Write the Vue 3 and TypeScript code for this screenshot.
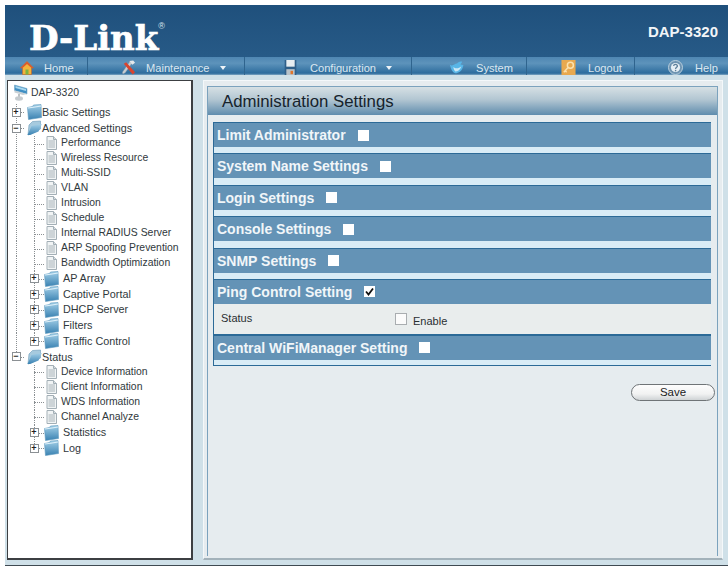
<script setup lang="ts">
type Row = { label: string; kind: 'top' | 'sub' | 'leaf'; open?: boolean; trunk: boolean; last?: boolean }
const leaf = (label: string, trunk = true): Row => ({ label, kind: 'leaf', trunk })
const sub = (label: string, trunk = true, last = false): Row => ({ label, kind: 'sub', trunk, last })
const rows: Row[] = [
  { label: 'Basic Settings', kind: 'top', trunk: true },
  { label: 'Advanced Settings', kind: 'top', open: true, trunk: true },
  ...['Performance', 'Wireless Resource', 'Multi-SSID', 'VLAN', 'Intrusion', 'Schedule', 'Internal RADIUS Server', 'ARP Spoofing Prevention', 'Bandwidth Optimization'].map(l => leaf(l)),
  sub('AP Array'), sub('Captive Portal'), sub('DHCP Server'), sub('Filters'), sub('Traffic Control', true, true),
  { label: 'Status', kind: 'top', open: true, trunk: false },
  ...['Device Information', 'Client Information', 'WDS Information', 'Channel Analyze'].map(l => leaf(l, false)),
  sub('Statistics', false), sub('Log', false, true),
]
const nav = [
  { label: 'Home', icon: 'i-home', cls: 'n-home' },
  { label: 'Maintenance', icon: 'i-tools', cls: 'n-maint', caret: true },
  { label: 'Configuration', icon: 'i-disk', cls: 'n-conf', caret: true },
  { label: 'System', icon: 'i-sys', cls: 'n-sys' },
  { label: 'Logout', icon: 'i-key', cls: 'n-out' },
  { label: 'Help', icon: 'i-help', cls: 'n-help' },
]
const sections = [
  { title: 'Limit Administrator' },
  { title: 'System Name Settings' },
  { title: 'Login Settings' },
  { title: 'Console Settings' },
  { title: 'SNMP Settings' },
  { title: 'Ping Control Setting', checked: true },
  { title: 'Central WiFiManager Setting' },
]
</script>

<template>
  <div class="page">
    <svg class="defs" width="0" height="0" aria-hidden="true">
      <defs>
        <linearGradient id="fold" x1="0" y1="0" x2="0" y2="1">
          <stop offset="0" stop-color="#a4d0e8" /><stop offset="1" stop-color="#3a82b2" />
        </linearGradient>
        <symbol id="i-folder" viewBox="0 0 15 16">
          <path d="M.5 3.5 L5.5 2.5 L6.5 1 L14 .5 L14.5 13.5 L1.5 15.5 Z" fill="url(#fold)" stroke="#5a97bd" stroke-width=".6" />
          <path d="M.8 4 L6.5 3.2 L14 2" fill="none" stroke="#dceff9" stroke-width="1.1" />
        </symbol>
        <symbol id="i-open" viewBox="0 0 15 16">
          <path d="M2 5 L5.5 1.5 L13.5 1 L13.5 9 L4 14 L1 15 Z" fill="#a6cade" stroke="#6b9bb9" stroke-width=".6" />
          <path d="M.5 15 L4.5 6 L14.8 4 L11.5 11.5 L3 15 Z" fill="url(#fold)" />
        </symbol>
        <symbol id="i-leaf" viewBox="0 0 11 14">
          <path d="M1 .5 H7.5 L10.5 3.5 V13.5 H1 Z" fill="#f1f4f5" stroke="#a3afb6" />
          <path d="M2.5 5 H9 M2.5 7 H9 M2.5 9 H9 M2.5 11 H9" stroke="#a9b4ba" />
          <path d="M7.5 .5 V3.5 H10.5" fill="#d5dde1" stroke="#a3afb6" />
        </symbol>
        <symbol id="i-root" viewBox="0 0 14 17">
          <path d="M.5 1 L13 4.5 L13 10 L.5 6.5 Z" fill="#3f8fc4" stroke="#78a9c6" stroke-width=".6" />
          <path d="M1.5 2 L12 5 L12 7 L1.5 4 Z" fill="#a8d7ee" />
          <path d="M.5 6.5 L13 10 L9 11 L.5 8.5 Z" fill="#c8d0d5" />
          <path d="M5 10 V13" stroke="#aab2b6" stroke-width="1.6" />
          <ellipse cx="5" cy="14.5" rx="4" ry="2.2" fill="#c5cbcf" />
        </symbol>
        <symbol id="i-home" viewBox="0 0 14 14">
          <path d="M7 .5 L13.5 7 H11.5 V13.5 H2.5 V7 H.5 Z" fill="#f2b33a" stroke="#c8632a" stroke-width=".6" />
          <path d="M7 .5 L13.5 7 H11.5 L7 3 L2.5 7 H.5 Z" fill="#d8582d" />
          <rect x="5.5" y="8.5" width="3" height="5" fill="#7cb342" />
        </symbol>
        <symbol id="i-tools" viewBox="0 0 16 16">
          <path d="M9.5 1.5 L11.5 3.5 L4.5 13.5 L2 15 L1.5 13 Z" fill="#c9ced2" stroke="#8d979e" stroke-width=".4" />
          <path d="M3 4 L5.5 2.5 L15 13 L12.5 15.5 Z" fill="#d9442e" />
          <path d="M9 1 L13 .5 L15 3 L12 5 Z" fill="#e6e9eb" />
        </symbol>
        <symbol id="i-disk" viewBox="0 0 14 18">
          <rect x="0" y="0" width="14" height="18" fill="#2f5f89" />
          <rect x="2" y="0" width="10" height="8" fill="#e7edf1" />
          <rect x="2" y="11" width="10" height="7" fill="#b8c2c9" />
          <rect x="7" y="13" width="3" height="4" fill="#e0752c" />
        </symbol>
        <symbol id="i-sys" viewBox="0 0 17 15">
          <path d="M1 4 C4 7 6 3 9 3 C11 1 13 0 15 1 L13 4 C16 4 17 5 16 6 C15 11 11 14 7 14 C4 13 2 9 1 4 Z" fill="#58b5e6" />
          <path d="M5 7 C7 9 11 9 14 6 C13 10 10 12 7 12 C6 11 5 9 5 7 Z" fill="#c9e8f7" />
        </symbol>
        <symbol id="i-key" viewBox="0 0 15 16">
          <rect x="0" y="0" width="15" height="16" fill="#e8a94f" />
          <circle cx="9.5" cy="5.5" r="3.2" fill="none" stroke="#fbe2ae" stroke-width="1.6" />
          <path d="M7 8 L2.5 13 M4 11.5 L5.5 13" stroke="#fbe2ae" stroke-width="1.6" fill="none" />
        </symbol>
        <symbol id="i-help" viewBox="0 0 15 15">
          <circle cx="7.5" cy="7.5" r="7" fill="#6e94b2" stroke="#b8cedd" />
          <circle cx="7.5" cy="7.5" r="4.6" fill="#e5eef4" />
          <path d="M5.6 6 C5.8 3.9 9.6 4 9.4 6.1 C9.3 7.3 7.6 7.3 7.6 9" fill="none" stroke="#5d7f9a" stroke-width="1.3" />
          <circle cx="7.6" cy="10.6" r=".8" fill="#5d7f9a" />
        </symbol>
      </defs>
    </svg>

    <header class="masthead">
      <div class="logo">D-Link<sup>®</sup></div>
      <div class="model">DAP-3320</div>
    </header>

    <nav class="menu">
      <div v-for="n in nav" :key="n.label" class="menu-item" :class="n.cls">
        <svg class="menu-icon"><use :href="'#' + n.icon" /></svg>
        <span class="menu-label">{{ n.label }}</span>
        <span v-if="n.caret" class="caret"></span>
      </div>
    </nav>

    <div class="body">
      <aside class="tree">
        <div class="root-row">
          <svg class="root-icon"><use href="#i-root" /></svg>
          <span>DAP-3320</span>
        </div>
        <div v-for="r in rows" :key="r.label" class="row" :class="'row-' + r.kind">
          <div class="cell c1" :class="{ trunk: r.trunk, 'trunk-end': r.label === 'Status', dash: r.kind === 'top' }">
            <span v-if="r.kind === 'top'" class="exp">{{ r.open ? '−' : '+' }}</span>
          </div>
          <div v-if="r.kind !== 'top'" class="cell c2 dash" :class="r.last ? 'trunk-end' : 'trunk'">
            <span v-if="r.kind === 'sub'" class="exp">+</span>
          </div>
          <svg v-if="r.kind === 'leaf'" class="ic-leaf"><use href="#i-leaf" /></svg>
          <svg v-else class="ic-folder"><use :href="r.open ? '#i-open' : '#i-folder'" /></svg>
          <span class="lbl">{{ r.label }}</span>
        </div>
      </aside>

      <main class="panel">
        <div class="inner">
          <h1 class="title">Administration Settings</h1>
          <div class="sections">
            <section v-for="s in sections" :key="s.title" class="sec">
              <div class="sec-head">
                <span>{{ s.title }}</span>
                <span class="box">
                  <svg v-if="s.checked" viewBox="0 0 11 11" width="11" height="11">
                    <path d="M2 5.5 L4.5 8.5 L9 2.5" fill="none" stroke="#111" stroke-width="1.8" />
                  </svg>
                </span>
              </div>
              <div v-if="s.checked" class="sec-body">
                <span class="st-label">Status</span>
                <span class="st-box"></span>
                <span class="st-enable">Enable</span>
              </div>
            </section>
          </div>
          <div class="actions"><button class="save" type="button">Save</button></div>
        </div>
      </main>
    </div>
    <div class="foot"></div>
  </div>
</template>

<style>
html, body { margin: 0; background: #fff; overflow: hidden; }
</style>

<style scoped>
.page { width: 723px; margin: 5px 0 0 5px; font-family: "Liberation Sans", Arial, sans-serif; position: relative; }
.defs { position: absolute; }
.masthead {
  height: 52px; display: flex; justify-content: space-between; align-items: flex-start;
  background: linear-gradient(#1f507c, #275a87);
}
.logo {
  font-family: "DejaVu Serif", serif; font-weight: 700; font-size: 34px; line-height: 40px;
  color: #fff; margin: 13px 0 0 24px; -webkit-text-stroke: .7px #fff;
}
.logo sup { font-family: "Liberation Sans", sans-serif; font-size: 9px; font-weight: 400; line-height: 0; vertical-align: 21px; color: #dde6ee; -webkit-text-stroke: 0; }
.model { color: #f2f5f8; font-weight: 700; font-size: 15px; margin: 18px 10px 0 0; }

.menu {
  height: 18px; display: flex;
  background: linear-gradient(#4f86b2 0, #5d93bb 35%, #2d6c9d 90%, #7ea6c3 100%);
}
.menu-item { display: flex; align-items: center; border-right: 1px solid #2f648e; box-sizing: border-box; color: #dbe7f0; font-size: 11.1px; }
.menu-icon { flex: none; width: 15px; height: 15px; margin-top: 3px; }
.menu-label { margin-top: 3px; }
.caret { width: 0; height: 0; border: 3.5px solid transparent; border-top: 4px solid #eef4f8; border-bottom: 0; margin: 3px 0 0 10px; }
.n-home { width: 83px; padding-left: 15px; }
.n-home .menu-icon { width: 14px; height: 14px; }
.n-home .menu-label { margin-left: 10px; }
.n-maint { width: 157px; padding-left: 33px; }
.n-maint .menu-label { margin-left: 10px; }
.n-conf { width: 167px; padding-left: 39px; }
.n-conf .menu-icon { width: 13px; height: 15px; }
.n-conf .menu-label { margin-left: 13px; }
.n-sys { width: 115px; padding-left: 37px; }
.n-sys .menu-label { margin-left: 12px; }
.n-out { width: 108px; padding-left: 34px; }
.n-out .menu-label { margin-left: 12px; }
.n-help { width: 93px; padding-left: 33px; border-right: 0; }
.n-help .menu-label { margin-left: 12px; }

.body { height: 490px; background: #cfe0e8; display: flex; box-sizing: border-box; padding: 5px 5px 5px 2px; }
.tree {
  width: 186px; box-sizing: border-box; background: #fff;
  border: 1px solid #3c3f42; border-width: 1px 2px 2px 1px; color: #30383c;
}
.root-row { height: 23px; display: flex; align-items: center; font-size: 10.4px; padding-left: 6px; }
.root-icon { width: 14px; height: 17px; margin-right: 3px; }
.row { display: flex; align-items: center; height: 16px; }
.row-sub { height: 15.6px; }
.row-leaf { height: 15px; }
.cell { flex: none; height: 100%; display: flex; align-items: center; justify-content: center; position: relative; }
.c1 { width: 16px; }
.c2 { width: 20px; }
.trunk, .trunk-end {
  background-image: repeating-linear-gradient(#8a8f92 0 1px, transparent 1px 2px);
  background-repeat: no-repeat; background-size: 1px 100%;
}
.trunk-end { background-size: 1px 50%; }
.c1 { background-position: 8px 0; }
.c2 { background-position: 10px 0; }
.dash::after { content: ""; position: absolute; left: 50%; right: 0; top: 50%; border-top: 1px dotted #8a8f92; }
.exp {
  width: 9px; height: 9px; box-sizing: border-box; border: 1px solid #8b9094; background: #fff;
  font: 700 9px/7px "Liberation Sans", sans-serif; text-align: center; color: #222; position: relative; z-index: 1;
}
.ic-folder { flex: none; width: 15px; height: 16px; margin-left: 3px; }
.ic-leaf { flex: none; width: 11px; height: 14px; margin-left: 2px; }
.lbl { white-space: nowrap; }
.row-top .lbl { font-size: 10.8px; margin-left: 0; }
.row-sub .ic-folder { margin-left: 0; }
.row-sub .lbl { font-size: 10.8px; margin: -1px 0 0 4px; }
.row-leaf .lbl { font-size: 10.4px; margin: -2px 0 0 4px; }
.row-leaf .ic-leaf { margin-top: -1px; }

.panel {
  margin-left: 10px; width: 520px; box-sizing: border-box;
  background: #e6ecef; border: 1px solid #f4f8fa; border-bottom: 2px solid #a3b2ba;
  padding: 5px 5px 2px 3px;
}
.inner { height: 100%; box-sizing: border-box; border: 1px solid #7ba2bd; border-bottom: 0; width: 511px; }
.title {
  margin: 0; height: 28px; box-sizing: border-box; padding-left: 14px;
  background: linear-gradient(#d6e0e4, #b2c6d2 45%, #5f8cad);
  font-weight: 400; font-size: 16.8px; line-height: 29px; color: #16232c;
}
.sections { margin: 7px 6px 0 5px; }
.sec { height: 31.4px; box-sizing: border-box; border-left: 1px solid #2c6a97; background: #d9ecf6; }
.sec:has(.sec-body) { height: 56px; }
.sec:last-child { height: 31px; border-bottom: 1px solid #2c6a97; }
.sec-head {
  height: 25px; box-sizing: border-box; border-top: 1px solid #2c6a97; background: #6493b6;
  display: flex; align-items: center; padding-left: 3px; color: #f1f6f9; font-weight: 700; font-size: 14px;
}
.box { width: 11px; height: 11px; background: #fff; margin-left: 12px; display: block; }
.box svg { display: block; }
.sec-body { height: 30px; background: #e9eded; display: flex; font-size: 11px; color: #2a2f32; border-bottom: 1px solid #2c6a97; }
.st-label { margin: 8px 0 0 7px; width: 174px; }
.st-box { width: 12px; height: 12px; box-sizing: border-box; background: #fbfbfb; border: 1px solid #a9adb0; margin-top: 9px; }
.st-enable { margin: 11px 0 0 6px; }

.actions { display: flex; justify-content: flex-end; margin: 18px 2px 0 0; }
.save {
  width: 84px; height: 17px; padding: 0; border: 1px solid #6f7477; border-radius: 9px;
  background: linear-gradient(#fdfdfd, #f1f2f2 60%, #cfd3d5); color: #222;
  font: 400 11.5px/15px "Liberation Sans", sans-serif;
}
.foot { height: 1px; background: #3f4a52; }
</style>
